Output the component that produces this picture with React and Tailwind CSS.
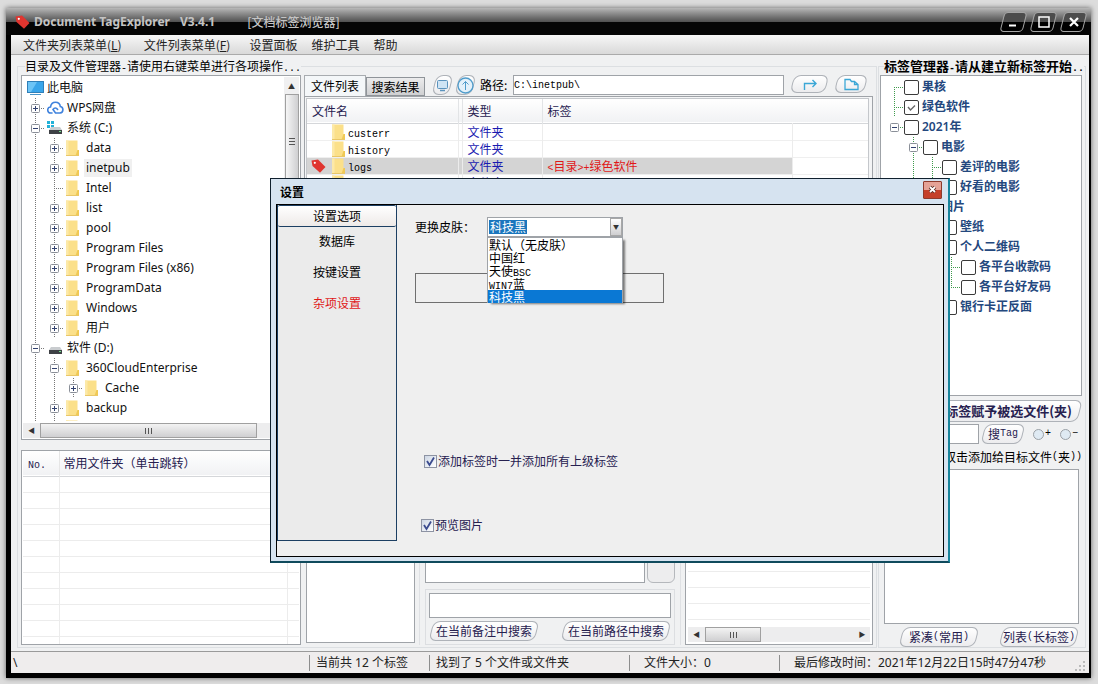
import React from 'react';

const folders = [
  { cells: '+', icon: 'cloud', name: 'WPS网盘' },
  { cells: '-', icon: 'system', name: '系统 (C:)' },
  { cells: '|+', icon: 'folder', name: 'data' },
  { cells: '|+', icon: 'folder', name: 'inetpub', active: true },
  { cells: '|t', icon: 'folder', name: 'Intel' },
  { cells: '|+', icon: 'folder', name: 'list' },
  { cells: '|+', icon: 'folder', name: 'pool' },
  { cells: '|+', icon: 'folder', name: 'Program Files' },
  { cells: '|+', icon: 'folder', name: 'Program Files (x86)' },
  { cells: '|+', icon: 'folder', name: 'ProgramData' },
  { cells: '|+', icon: 'folder', name: 'Windows' },
  { cells: '|+', icon: 'folder', name: '用户' },
  { cells: '-', icon: 'disk', name: '软件 (D:)' },
  { cells: '|-', icon: 'folder', name: '360CloudEnterprise' },
  { cells: '||+', icon: 'folder', name: 'Cache' },
  { cells: '|+', icon: 'folder', name: 'backup' },
  { cells: '||', icon: 'folder', name: '' },
];

const tags = [
  { cells: 'r', name: '果核' },
  { cells: 't', name: '绿色软件', checked: true },
  { cells: 'e', name: '2021年' },
  { cells: ' -', name: '电影' },
  { cells: ' |t', name: '差评的电影' },
  { cells: ' |l', name: '好看的电影' },
  { cells: ' -', name: '图片' },
  { cells: '  t', name: '壁纸' },
  { cells: '  -', name: '个人二维码' },
  { cells: '  |t', name: '各平台收款码' },
  { cells: '  |l', name: '各平台好友码' },
  { cells: '  l', name: '银行卡正反面' },
];

const files = [
  { name: 'custerr', type: '文件夹', tag: '' },
  { name: 'history', type: '文件夹', tag: '' },
  { name: 'logs', type: '文件夹', tag: '<目录>+绿色软件', selected: true },
  { name: '', type: '文件夹', tag: '' },
];

const skins = ['默认（无皮肤）', '中国红', '天使BSC', 'WIN7蓝', '科技黑'];

// Latin runs are set half as wide as the Chinese characters around them
const Mono = ({ children }) => (
  <span className="font-['Liberation_Mono',monospace] text-[10px] leading-none">{children}</span>
);

const mixed = (text) =>
  text.split(/([\x20-\x7e]+)/).map((part, i) => (i % 2 ? <Mono key={i}>{part}</Mono> : part));

const TreeCell = ({ kind, stroke }) => {
  const up = '|t+-l'.includes(kind);
  const down = '|t+-r'.includes(kind);
  const right = 'trl+-e'.includes(kind);
  return (
    <svg width="19" height="20" viewBox="0 0 19 20" className="shrink-0" fill="none" aria-hidden="true">
      <g stroke={stroke} strokeDasharray="1 1">
        {up && <path d="M9.5 0V10" />}
        {down && <path d="M9.5 10V20" />}
        {right && <path d="M9 10.5H19" />}
      </g>
      {'+-e'.includes(kind) && (
        <>
          <rect x="5.5" y="6.5" width="8" height="8" rx="1" fill="#fff" stroke="#8a8f98" />
          <path d="M7 10.5H12" stroke="#31406e" />
        </>
      )}
      {kind === '+' && <path d="M9.5 8V13" stroke="#31406e" />}
    </svg>
  );
};

const FolderIcon = () => (
  <svg width="14" height="16" viewBox="0 0 14 16" className="shrink-0" aria-hidden="true">
    <path d="M0 0.500h11.500v9.500h1.500v5.500H0z" fill="#fbe08a" />
    <path d="M0 0.500h2.500v15H0z" fill="#fce9a8" />
    <path d="M11.500 10h1.500v5.500H9.500z" fill="#f0c955" />
    <path d="M0 15.500h13" stroke="#e9c768" />
  </svg>
);

const TreeIcon = ({ icon }) => {
  if (icon === 'folder') return <FolderIcon />;
  if (icon === 'cloud')
    return (
      <svg width="17" height="14" viewBox="0 0 17 14" fill="none" stroke="#3f82dd" strokeWidth="1.600" strokeLinecap="round" aria-hidden="true">
        <path d="M5 12H4a3 3 0 0 1-.5-6C4 3 6 1.200 8.500 1.200S13 3 13.300 5.500A3.300 3.300 0 0 1 13 12H8.500L6 8.500c1.200-2 3.500-2 4.600 0" />
      </svg>
    );
  if (icon === 'pc')
    return (
      <svg width="17" height="15" viewBox="0 0 17 15" aria-hidden="true">
        <rect x="0.500" y="0.500" width="16" height="11" fill="#39a5ea" stroke="#2f7fb8" />
        <path d="M1 1h9L4 11H1z" fill="#6cc4f6" />
        <path d="M3 13.500h11" stroke="#4a95c8" />
      </svg>
    );
  return (
    <svg width="17" height="14" viewBox="0 0 17 14" aria-hidden="true">
      {icon === 'system' && (
        <g fill="#22b1d8">
          <path d="M0 0h3v3H0zM4 0h3v3H4zM0 4h3v3H0zM4 4h3v3H4z" />
        </g>
      )}
      <path d="M4 6h9l2 3H2z" fill="#c9cccf" />
      <rect x="2" y="9" width="13" height="4" fill="#3e4145" />
      <rect x="12" y="10" width="2" height="1" fill="#6fe28a" />
    </svg>
  );
};

const TagIcon = () => (
  <svg width="15" height="14" viewBox="0 0 15 14" className="shrink-0" aria-hidden="true">
    <path d="M0.500 1.500L7 .500 14.500 8 9 13.800 1.500 7z" fill="#e0352f" />
    <circle cx="3.800" cy="3.800" r="1.100" fill="#fff" />
  </svg>
);

// Slanted pill button, the slant sits on the backdrop only
const PillButton = ({ className = '', children, ...rest }) => (
  <button
    type="button"
    className={`relative isolate flex h-5 items-center justify-center whitespace-nowrap text-[#26204f] before:absolute before:inset-x-[2px] before:inset-y-0 before:-z-10 before:-skew-x-[14deg] before:rounded-[7px] before:border before:border-[#aeb2b8] before:bg-linear-to-b before:from-white before:to-[#ececee] before:content-[''] ${className}`}
    {...rest}
  >
    {children}
  </button>
);

const TitleButton = ({ label, children }) => (
  <button
    type="button"
    aria-label={label}
    className="relative isolate flex h-5 w-[27px] items-center justify-center before:absolute before:inset-x-[2px] before:inset-y-0 before:-z-10 before:-skew-x-[14deg] before:rounded-[4px] before:border before:border-[#a5a5a5] before:bg-linear-to-b before:from-[#4c4c4c] before:from-50% before:to-black before:to-50% before:content-['']"
  >
    <svg width="14" height="14" viewBox="0 0 14 14" fill="none" stroke="#fff" aria-hidden="true">
      {children}
    </svg>
  </button>
);

const HScroll = ({ thumb, end }) => (
  <div className="flex h-[15px] items-center bg-[#ededee]">
    <span className="w-[17px] text-center text-[7px] leading-[15px] text-[#333]">◀</span>
    <span className={`flex h-[15px] items-center justify-center gap-[2px] border border-[#a0a0a0] bg-linear-to-b from-[#f3f3f3] to-[#cfcfd1] ${thumb}`}>
      <i className="h-[6px] w-px bg-[#555]" />
      <i className="h-[6px] w-px bg-[#555]" />
      <i className="h-[6px] w-px bg-[#555]" />
    </span>
    {end && <span className="ml-auto w-4 text-center text-[7px] leading-[15px] text-[#333]">▶</span>}
  </div>
);

const FolderTree = () => (
  <div className="flex min-h-0 flex-1 flex-col border border-[#9fa3a8] bg-white p-px">
    <div className="flex min-h-0 flex-1">
      <ul className="h-[344px] min-w-0 flex-1 overflow-hidden pt-px pl-[3px] font-['Noto_Sans','Noto_Sans_CJK_SC',sans-serif] text-[12px] text-[#111]">
        <li className="flex h-5 items-center">
          <span className="flex w-[21px] justify-start pl-px"><TreeIcon icon="pc" /></span>
          <span>此电脑</span>
        </li>
        {folders.map((f) => (
          <li key={f.name} className="flex h-5 items-center">
            {f.cells.split('').map((c, i) => (
              <TreeCell key={i} kind={c} stroke="#777" />
            ))}
            <span className="flex w-5 shrink-0 justify-start pl-[2px]"><TreeIcon icon={f.icon} /></span>
            <span className={f.active ? 'bg-[#f0f0f0] px-[2px] leading-[18px]' : 'px-[2px] leading-[18px]'}>{f.name}</span>
          </li>
        ))}
      </ul>
      <div className="flex w-[15px] flex-col items-center bg-[#f0f0f1]">
        <span className="flex h-[17px] items-center text-[7px] text-[#333]">▲</span>
        <span className="flex h-[94px] w-[14px] flex-col items-center justify-center gap-[2px] border border-[#a0a0a0] bg-linear-to-r from-[#f6f6f6] to-[#cfcfd1]">
          <i className="h-px w-[6px] bg-[#555]" />
          <i className="h-px w-[6px] bg-[#555]" />
          <i className="h-px w-[6px] bg-[#555]" />
        </span>
      </div>
    </div>
    <div className="pt-px pr-4">
      <HScroll thumb="w-[217px]" />
    </div>
  </div>
);

const FavouriteTable = () => (
  <div className="h-[195px] overflow-hidden border border-[#9fa3a8] bg-white px-px">
    <table className="w-full table-fixed border-collapse text-left">
      <colgroup>
        <col className="w-[36px]" />
        <col />
        <col className="w-[12px]" />
      </colgroup>
      <thead>
        <tr className="h-[25px] border-b border-[#d5d7da] bg-linear-to-b from-white to-[#f1f2f4] text-[#26204f]">
          <th className="border-r border-[#e6e6e6] pl-[5px] font-normal"><Mono>No.</Mono></th>
          <th className="pl-1 font-normal">常用文件夹（单击跳转）</th>
          <th />
        </tr>
      </thead>
      <tbody>
        {Array.from({ length: 11 }, (_, i) => (
          <tr key={i} className="h-4 border-b border-[#ececec]">
            <td className="border-r border-[#ececec]" />
            <td className="border-r border-[#ececec]" />
            <td />
          </tr>
        ))}
      </tbody>
    </table>
  </div>
);

const FileTable = () => (
  <div className="min-h-0 flex-1 border border-[#9fa3a8] bg-[#f4f5f6] p-px pr-[3px]">
    <div className="h-full overflow-hidden border border-[#c4c7cb] bg-white">
      <table className="w-full table-fixed border-collapse text-left">
        <colgroup>
          <col className="w-[151px]" />
          <col className="w-[4px]" />
          <col className="w-[80px]" />
          <col className="w-[250px]" />
          <col />
        </colgroup>
        <thead>
          <tr className="h-[24px] border-b border-[#d5d7da] bg-linear-to-b from-white to-[#f1f2f4] text-[#26204f]">
            <th className="border-r border-[#e2e4e6] pl-[5px] font-normal">文件名</th>
            <th className="border-r border-[#e2e4e6] p-0" />
            <th className="border-r border-[#e2e4e6] pl-[5px] font-normal">类型</th>
            <th className="pl-[5px] font-normal">标签</th>
            <th />
          </tr>
        </thead>
        <tbody>
          {files.map((f) => (
            <tr key={f.name} className="h-[17px] border-b border-[#efefef] leading-4">
              <td className={`border-r border-[#ececec] p-0 ${f.selected ? 'bg-[#d4d4d4]' : ''}`}>
                <span className="flex h-4 items-center pl-1">
                  <span className="w-[21px]">{f.selected && <TagIcon />}</span>
                  <FolderIcon />
                  <span className="pl-[2px]"><Mono>{f.name}</Mono></span>
                </span>
              </td>
              <td className={`border-r border-[#ececec] p-0 ${f.selected ? 'bg-[#d4d4d4]' : ''}`} />
              <td className={`border-r border-[#ececec] p-0 pl-[5px] text-[#1a1ab0] ${f.selected ? 'bg-[#d4d4d4]' : ''}`}>{f.type}</td>
              <td className={`border-r border-[#ececec] p-0 pl-[5px] text-[#e01818] ${f.selected ? 'bg-[#d4d4d4]' : ''}`}>{mixed(f.tag)}</td>
              <td />
            </tr>
          ))}
        </tbody>
      </table>
    </div>
  </div>
);

const PathBar = () => (
  <div className="flex h-[21px] items-end">
    <button type="button" className="h-[21px] w-[62px] border border-b-0 border-[#a8acb0] bg-[#f4f7f9] text-black">文件列表</button>
    <button type="button" className="h-[19px] w-[59px] border border-[#8f9499] bg-linear-to-b from-[#ececed] to-[#cfd0d2] leading-[17px] text-black">搜索结果</button>
    <div className="ml-[7px] flex h-[21px] flex-1 items-start">
      <PillButton aria-label="桌面" className="w-[21px]">
        <svg width="13" height="13" viewBox="0 0 13 13" fill="none" stroke="#5b93bd" aria-hidden="true">
          <rect x="1.500" y="1.500" width="10" height="8" rx="1" fill="#cfe4f4" />
          <path d="M4 11.500h5" strokeWidth="1.500" />
        </svg>
      </PillButton>
      <PillButton aria-label="上级目录" className="ml-[2px] w-[21px]">
        <svg width="17" height="17" viewBox="0 0 17 17" fill="none" stroke="#4f9ccb" aria-hidden="true">
          <circle cx="8.500" cy="8.500" r="7.500" fill="#e3f1fa" strokeWidth="1.300" />
          <path d="M8.500 13V4.500M5.500 7.500l3-3 3 3" />
        </svg>
      </PillButton>
      <label htmlFor="path" className="ml-1 w-[57px] leading-5 whitespace-nowrap">路径:</label>
      <input
        id="path"
        defaultValue="C:\inetpub\"
        className="-ml-[24px] h-5 min-w-0 flex-1 border border-[#9fa3a8] bg-white font-['Liberation_Mono',monospace] text-[10px] text-black"
      />
      <PillButton aria-label="转到" className="ml-[6px] h-[18px] w-[39px]">
        <svg width="14" height="13" viewBox="0 0 14 13" fill="none" stroke="#3ba7d6" strokeWidth="1.400" aria-hidden="true">
          <path d="M1.500 12V5.500h11M9.500 2l3.500 3.500L9.500 9" />
        </svg>
      </PillButton>
      <PillButton aria-label="打开文件夹" className="mx-[5px] h-[18px] w-[34px]">
        <svg width="15" height="13" viewBox="0 0 15 13" fill="none" stroke="#3ba7d6" strokeWidth="1.300" aria-hidden="true">
          <path d="M1 1.500h5l1.500 2h3l3.500 3v5H1zM10.500 3.500v3H14" />
        </svg>
      </PillButton>
    </div>
  </div>
);

const NotesPanel = () => (
  <div className="flex w-[262px] flex-col border-x border-[#dfe1e4] px-[5px]">
    <div className="flex min-h-0 flex-1 items-end gap-[2px]">
      <textarea aria-label="备注" className="h-full min-w-0 flex-1 resize-none border border-[#9fa3a8] bg-white" />
      <button type="button" aria-label="保存备注" className="h-full w-[28px] rounded-b-[6px] border border-[#b5b8bc] bg-[#ededee]" />
    </div>
    <div className="mt-[6px] border border-[#dcdee1] px-[3px] pt-[3px] pb-[3px]">
      <input aria-label="搜索内容" className="block h-[25px] w-full border border-[#9fa3a8] bg-white" />
      <div className="mt-[3px] flex justify-between">
        <PillButton className="w-[110px]">在当前备注中搜索</PillButton>
        <PillButton className="w-[110px]">在当前路径中搜索</PillButton>
      </div>
    </div>
  </div>
);

const TagPanel = () => (
  <>
    <ul className="min-h-0 flex-1 overflow-hidden border border-[#9fa3a8] bg-white pt-px pl-1 font-['Noto_Sans','Noto_Sans_CJK_SC',sans-serif] font-semibold text-[#24487e]">
      {tags.map((t) => (
        <li key={t.name} className="flex h-5 items-center">
          {t.cells.split('').map((c, i) => (
            <TreeCell key={i} kind={c} stroke="#3f9a4c" />
          ))}
          <label className="flex items-center gap-[3px] whitespace-nowrap">
            <span className="grid">
              <input type="checkbox" defaultChecked={t.checked} className="peer col-start-1 row-start-1 size-[15px] appearance-none rounded-[2px] border border-[#3a3a3a] bg-white" />
              <svg viewBox="0 0 15 15" className="invisible col-start-1 row-start-1 size-[15px] peer-checked:visible" fill="none" stroke="#666" strokeWidth="1.400" aria-hidden="true">
                <path d="M4 7l2.500 3L11 5.500" />
              </svg>
            </span>
            {t.name}
          </label>
        </li>
      ))}
    </ul>
    <PillButton className="mt-1 h-[22px] w-full justify-end pr-[10px] text-[13px] font-bold">将选中标签赋予被选文件(夹)</PillButton>
    <div className="mt-[2px] flex h-5 items-center pr-1">
      <input aria-label="搜索标签" className="h-5 min-w-0 flex-1 border border-[#9fa3a8] bg-white" />
      <PillButton className="ml-[2px] w-[44px]">{mixed('搜Tag')}</PillButton>
      <label className="ml-2 flex items-center gap-px">
        <input type="radio" name="mode" className="size-[11px] appearance-none rounded-full border border-[#9aa0a6] bg-[#dfeaf3]" />
        <Mono>+</Mono>
      </label>
      <label className="ml-[9px] flex items-center gap-px">
        <input type="radio" name="mode" className="size-[11px] appearance-none rounded-full border border-[#9aa0a6] bg-[#dfeaf3]" />
        <Mono>−</Mono>
      </label>
    </div>
    <div className="flex h-[25px] items-center justify-end whitespace-nowrap text-black">{mixed('常用标签(双击添加给目标文件(夹))')}</div>
    <div className="mr-[3px] ml-1 h-[155px] border border-[#9fa3a8] bg-white" />
    <div className="mt-[3px] mr-[3px] flex justify-end gap-5">
      <PillButton className="w-[80px]">{mixed('紧凑(常用)')}</PillButton>
      <PillButton className="w-[80px]">{mixed('列表(长标签)')}</PillButton>
    </div>
  </>
);

const SettingCheck = ({ children }) => (
  <label className="flex h-4 items-center gap-px text-[#26204f]">
    <span className="grid">
      <input type="checkbox" defaultChecked className="peer col-start-1 row-start-1 size-[13px] appearance-none border border-[#8d93a3] bg-linear-to-br from-[#cdd6e4] to-white" />
      <svg viewBox="0 0 13 13" className="invisible col-start-1 row-start-1 size-[13px] peer-checked:visible" fill="none" stroke="#3b4b8f" strokeWidth="1.800" aria-hidden="true">
        <path d="M3 6l2.500 4L10 2.500" />
      </svg>
    </span>
    {children}
  </label>
);

const SettingsDialog = () => (
  <section
    role="dialog"
    aria-labelledby="settings-title"
    className="absolute top-[178px] left-[270px] flex h-[385px] w-[680px] flex-col border border-r-2 border-b-2 border-[#10202e] border-r-[#17849c] border-b-[#0f4a5c] bg-[#d6e3f0] pr-1 pb-1 pl-[5px]"
  >
    <header className="flex h-[25px] items-center justify-between pr-[2px] pl-1">
      <h2 id="settings-title" className="text-[12px] font-bold text-black">设置</h2>
      <button type="button" aria-label="关闭" className="mb-1 flex h-[18px] w-[19px] items-center justify-center rounded-[1px] border border-[#8e3a2c] bg-linear-to-b from-[#e5a296] from-50% to-[#c5402a] to-50%">
        <svg width="9" height="9" viewBox="0 0 9 9" aria-hidden="true">
          <path d="M2 2l5 5M7 2L2 7" stroke="#5c2a22" strokeWidth="3.500" />
          <path d="M2 2l5 5M7 2L2 7" stroke="#fff" strokeWidth="1.800" />
        </svg>
      </button>
    </header>
    <div className="flex flex-1 border border-black bg-[#efefef]">
      <nav className="mb-[15px] flex w-[120px] flex-col items-center border border-t-0 border-[#1c3f63] bg-[#ebebeb]">
        <button type="button" className="h-[22px] w-full rounded-[2px] border-y border-[#1c3f63] bg-linear-to-b from-white to-[#eeeae8] text-black">设置选项</button>
        <button type="button" className="mt-[6px] h-4 leading-4 text-black">数据库</button>
        <button type="button" className="mt-[15px] h-4 leading-4 text-black">按键设置</button>
        <button type="button" className="mt-[15px] h-4 leading-4 text-[#e01818]">杂项设置</button>
      </nav>
      <div className="flex-1 pt-3 pl-[18px]">
        <div className="flex h-5 items-center gap-3">
          <label htmlFor="skin" className="w-[60px] whitespace-nowrap text-black">更换皮肤：</label>
          <div className="relative h-5 w-[136px]">
            <select
              id="skin"
              defaultValue="科技黑"
              className="block h-5 w-full appearance-none border border-[#9fa3a8] bg-white bg-[linear-gradient(#1b76bd,#1b76bd)] bg-[length:38px_14px] bg-[position:1px_2px] bg-no-repeat pl-[2px] text-[12px] leading-[18px] text-white"
            >
              {skins.map((s) => (
                <option key={s} className="text-black">{s}</option>
              ))}
            </select>
            <span className="pointer-events-none absolute top-px right-px flex h-[18px] w-3 items-center justify-center border border-[#a8a8a8] bg-linear-to-b from-white to-[#cfcfd1] text-[6px] text-[#333]">▼</span>
            <ul role="listbox" aria-label="皮肤" className="absolute top-5 left-0 w-[136px] border border-b-0 border-[#9fa3a8] bg-white leading-[13px] text-black shadow-[3px_2px_2px_-1px_#00000080]">
              {skins.map((s) => (
                <li
                  key={s}
                  role="option"
                  aria-selected={s === '科技黑'}
                  className={`h-[13px] pl-px whitespace-nowrap ${s === '科技黑' ? 'bg-[#0a78d4] text-white' : ''}`}
                >
                  {mixed(s)}
                </li>
              ))}
            </ul>
          </div>
        </div>
        <div className="mt-9 h-[30px] w-[249px] border border-[#6f6f6f]" />
        <div className="mt-[150px] ml-[9px]">
          <SettingCheck>添加标签时一并添加所有上级标签</SettingCheck>
        </div>
        <div className="mt-12 ml-[6px]">
          <SettingCheck>预览图片</SettingCheck>
        </div>
      </div>
    </div>
  </section>
);

const App = () => {
  return (
    <div className="relative flex min-h-screen flex-col bg-[#dcdcdc] pt-2 pr-[7px] pb-[6px] pl-[6px] font-['Noto_Sans_CJK_SC',sans-serif] text-[12px] leading-4">
      <div className="flex flex-1 flex-col border-r-2 border-b-[5px] border-l-[5px] border-black bg-[#f0f1f2] shadow-[0_0_5px_#00000090]">
        {/* Title bar */}
        <header className="-mr-[2px] -ml-[5px] flex h-[27px] items-center bg-linear-to-b from-[#b8b8b8] via-[#4f4f4f] via-52% to-[#050505] to-52% pr-1 pl-[9px]">
          <TagIcon />
          <h1 className="ml-1 flex gap-[10px] font-['Noto_Sans','Noto_Sans_CJK_SC',sans-serif] text-[12px] font-bold text-[#c4c4c4]">
            <span>Document TagExplorer</span>
            <span>V3.4.1</span>
          </h1>
          <span className="ml-8 font-medium text-[#c4c4c4]">[文档标签浏览器]</span>
          <div className="ml-auto flex gap-[3px]">
            <TitleButton label="最小化"><path d="M2 10.500h7" strokeWidth="2" /></TitleButton>
            <TitleButton label="最大化"><rect x="2" y="2" width="10" height="10" strokeWidth="1.500" /></TitleButton>
            <TitleButton label="关闭"><path d="M3 3l8 8M11 3l-8 8" strokeWidth="2.200" /></TitleButton>
          </div>
        </header>

        {/* Menu bar */}
        <nav className="flex h-5 items-center gap-[14px] border-b border-[#aaa] bg-linear-to-b from-[#f7f7f7] to-[#d9d9d9] pl-3 text-[#222]">
          <button type="button" className="mr-2">文件夹列表菜单(<u>L</u>)</button>
          <button type="button" className="mr-[5px]">文件列表菜单(<u>F</u>)</button>
          <button type="button">设置面板</button>
          <button type="button">维护工具</button>
          <button type="button">帮助</button>
        </nav>

        {/* Main area */}
        <main className="flex flex-1 gap-px pt-[2px] pr-[3px] pb-[3px] pl-[6px]">
          <fieldset className="flex min-w-0 flex-1 flex-col border border-[#dcdfe2] px-[3px] pb-[2px]">
            <legend className="ml-1 h-[18px] leading-[18px] whitespace-nowrap text-black">{mixed('目录及文件管理器-请使用右键菜单进行各项操作...')}</legend>
            <div className="flex flex-1 gap-[3px]">
              <div className="flex w-[280px] shrink-0 flex-col gap-[10px]">
                <FolderTree />
                <FavouriteTable />
              </div>
              <div className="flex min-w-0 flex-1 flex-col">
                <PathBar />
                <FileTable />
                <div className="mt-[10px] flex h-[195px] pl-[2px]">
                  <div className="mb-[2px] min-w-0 flex-1 border border-[#9fa3a8] bg-white" />
                  <div className="mr-1 ml-[4px] flex">
                    <NotesPanel />
                  </div>
                  <div className="flex w-[188px] flex-col justify-end border border-[#9fa3a8] bg-white p-[2px]">
                    {Array.from({ length: 5 }, (_, i) => (
                      <div key={i} className="h-4 border-b border-[#ececec]" />
                    ))}
                    <div className="mt-[7px]">
                      <HScroll thumb="w-[56px]" end />
                    </div>
                  </div>
                </div>
              </div>
            </div>
          </fieldset>

          <fieldset className="flex w-[208px] min-w-0 shrink-0 flex-col border border-[#dcdfe2] pr-[3px] pl-px">
            <legend className="ml-1 h-[18px] text-[13px] leading-[18px] font-bold whitespace-nowrap text-black">
              标签管理器<Mono>-</Mono>请从建立新标签开始<Mono>..</Mono>
            </legend>
            <div className="flex min-w-0 flex-1 flex-col">
              <TagPanel />
            </div>
          </fieldset>
        </main>

        {/* Status bar */}
        <footer className="flex h-[22px] items-center border-t border-[#9a9a9a] bg-[#efeded] font-['Noto_Sans','Noto_Sans_CJK_SC',sans-serif] text-[#222]">
          <span className="w-[298px] pl-[2px]">\</span>
          <span className="w-[120px] border-l border-[#8d8d8d] pl-[6px]">当前共 12 个标签</span>
          <span className="w-[200px] border-l border-[#8d8d8d] pl-[6px]">找到了 5 个文件或文件夹</span>
          <span className="w-[150px] border-l border-[#8d8d8d] pl-[14px]">文件大小：0</span>
          <span className="flex-1 border-l border-[#8d8d8d] pl-[14px]">最后修改时间：2021年12月22日15时47分47秒</span>
          <svg width="13" height="13" viewBox="0 0 13 13" className="mr-[3px] self-end" fill="#bbb" aria-hidden="true">
            <path d="M10 1h2v2h-2zM10 5h2v2h-2zM10 9h2v2h-2zM6 5h2v2H6zM6 9h2v2H6zM2 9h2v2H2z" />
          </svg>
        </footer>
      </div>

      <SettingsDialog />
    </div>
  );
};

export default App;
